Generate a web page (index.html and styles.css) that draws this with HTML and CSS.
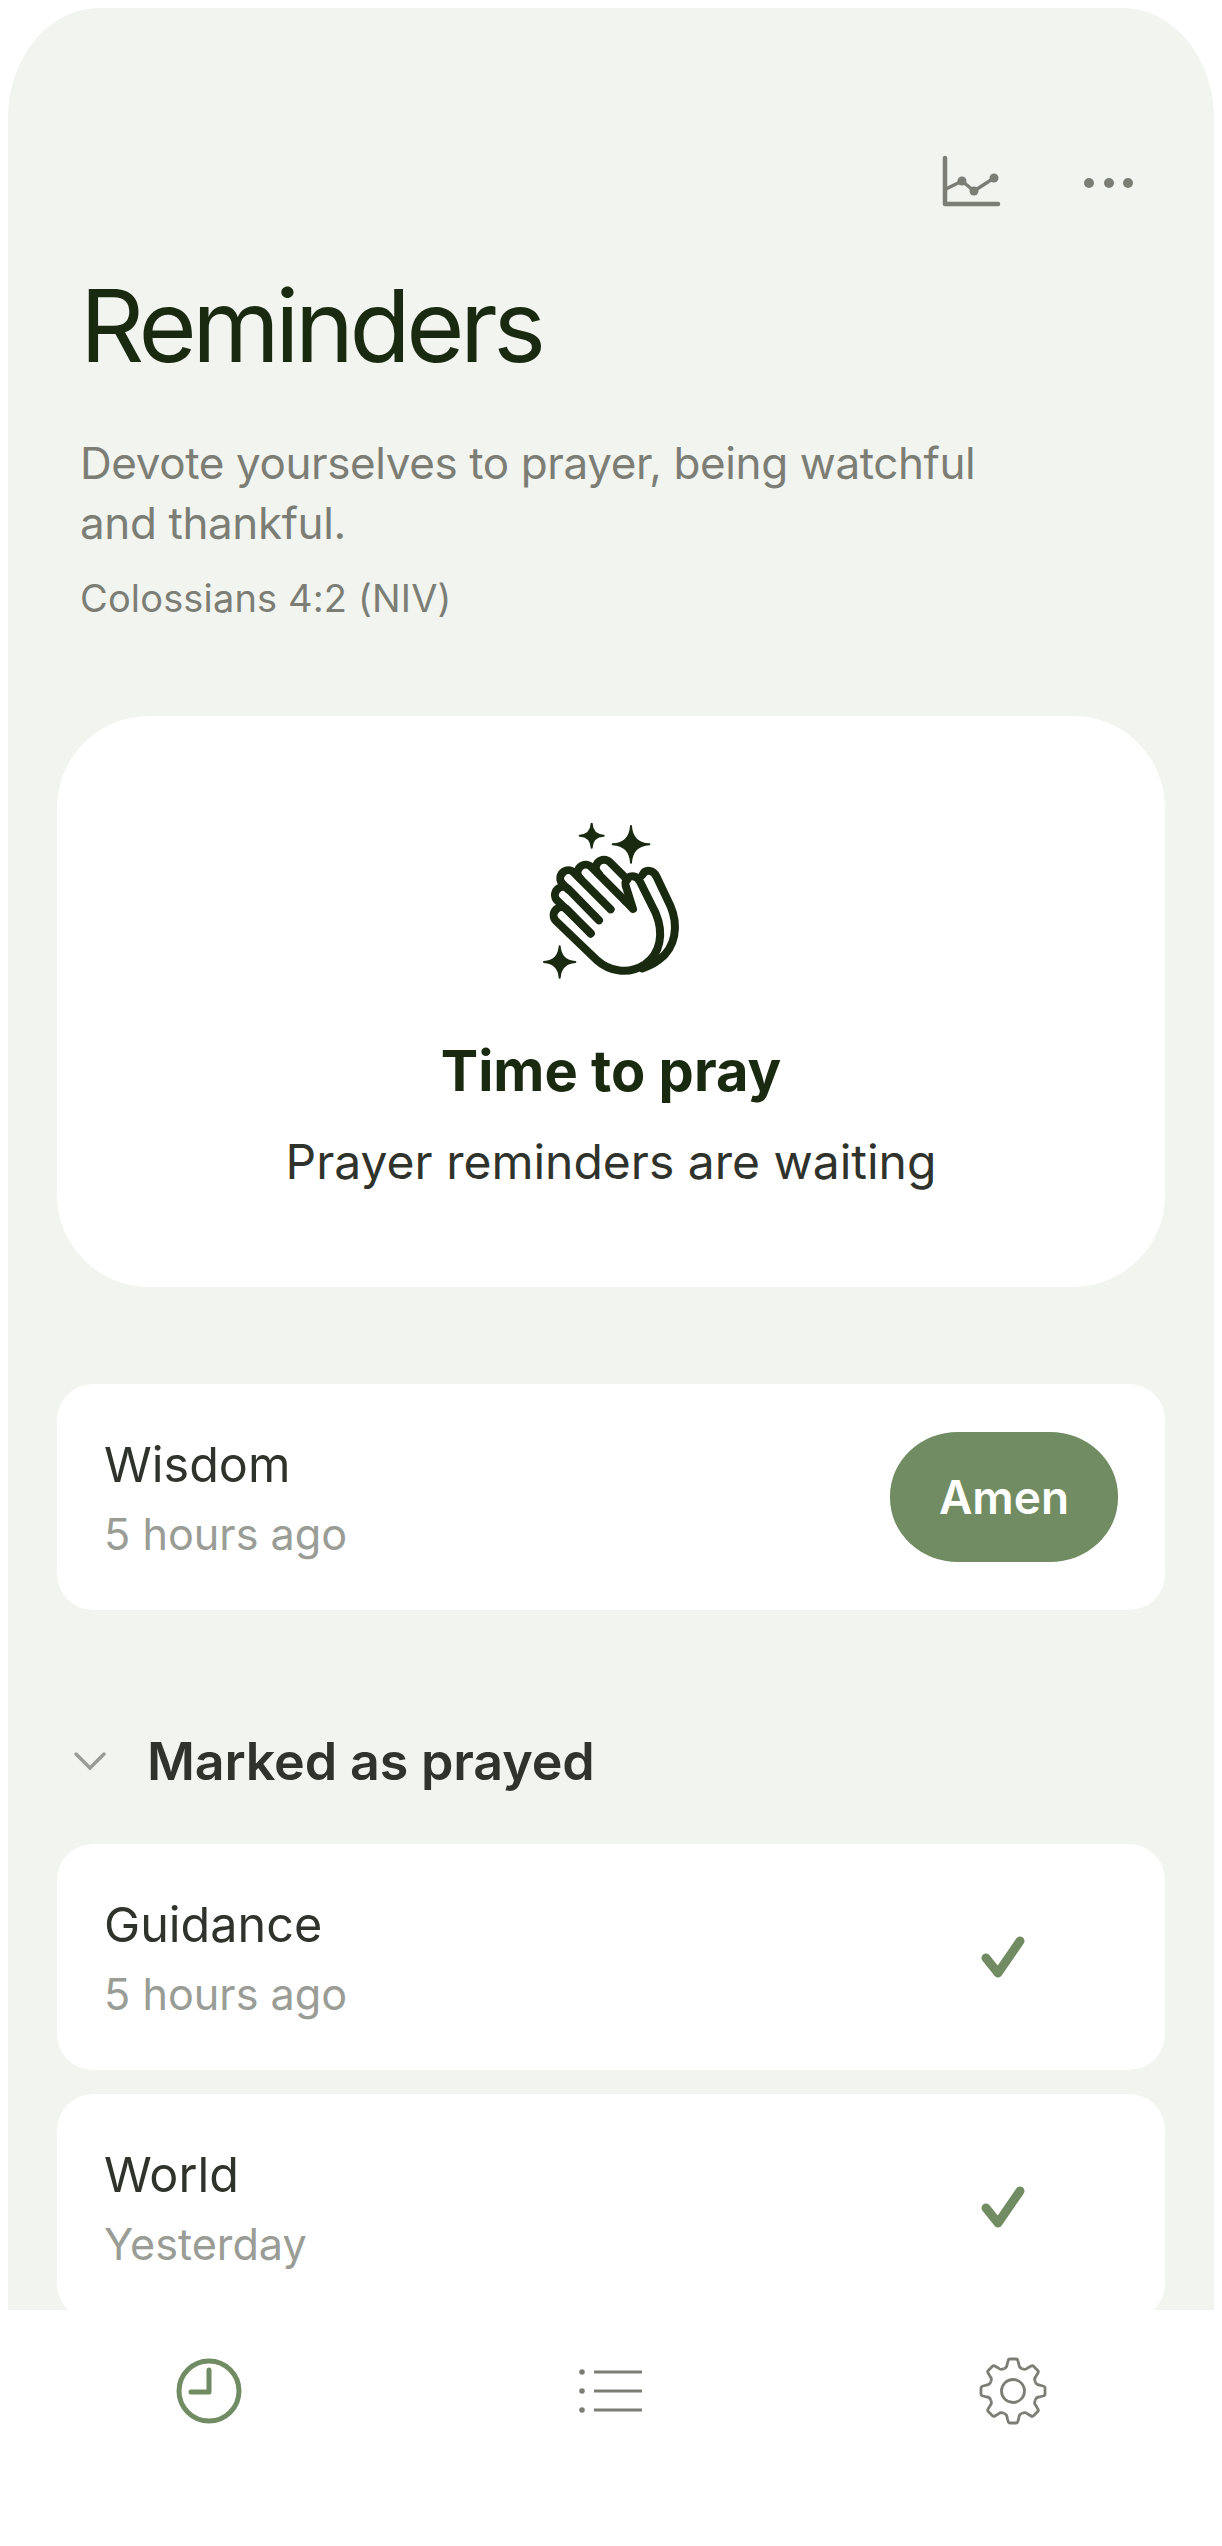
FILE: index.html
```html
<!DOCTYPE html>
<html lang="en">
<head>
    <meta charset="UTF-8">
    <meta name="viewport" content="width=device-width, initial-scale=1.0">
    <title>Reminders</title>
    <link rel="stylesheet" href="styles.css">
</head>
<body>
    <div class="panel">
        <div class="toolbar">
            <svg class="chart-icon" width="64" height="58" viewBox="0 0 64 58">
                <path class="chart-axis" d="M7 4V50H60"/>
                <path class="chart-line" d="M8 35L24 27L36 37L56 24"/>
                <circle cx="24" cy="27" r="4.5"/>
                <circle cx="36" cy="37" r="4.5"/>
                <circle cx="56" cy="24" r="4.5"/>
            </svg>
            <svg class="more-icon" width="50" height="12" viewBox="0 0 50 12">
                <circle cx="5" cy="6" r="5"/>
                <circle cx="25" cy="6" r="5"/>
                <circle cx="44" cy="6" r="5"/>
            </svg>
        </div>

        <h1>Reminders</h1>
        <p class="verse">Devote yourselves to prayer, being watchful<br>and thankful.</p>
        <p class="verse-ref">Colossians 4:2 (NIV)</p>

        <div class="hero">
            <svg class="hands" width="240" height="200" viewBox="0 0 720 600">
                <path class="spark" d="M338 98C339 120 352 133 374 134C352 135 339 148 338 170C337 148 324 135 302 134C324 133 337 120 338 98Z"/>
                <path class="spark" d="M456 105C458 138 478 158 511 160C478 162 458 182 456 215C454 182 434 162 401 160C434 158 454 138 456 105Z"/>
                <path class="spark" d="M242 466C244 494 261 511 289 513C261 515 244 532 242 560C240 532 223 515 195 513C223 511 240 494 242 466Z"/>
                <path class="hand" d="M490 252C500 232 524 238 532 256L574 344C600 404 590 470 540 506C525 518 508 526 490 532"/>
                <path class="hand" d="M335 428L265 356A24 24 0 0 0 231 390L352 506C392 542 448 552 498 520C544 488 556 428 530 366L482 270C468 244 434 256 440 284L462 354L440 331"/>
                <path class="hand" d="M335 426L235 329A24 24 0 0 1 269 295L360 388"/>
                <path class="hand" d="M268 296L251 279A24 24 0 0 1 285 245L395 355"/>
                <path class="hand" d="M305 264L303 262A24 24 0 0 1 337 228L440 331"/>
                <path class="hand" d="M360 249L358 247A24 24 0 0 1 392 213L445 266"/>
            </svg>
            <h2>Time to pray</h2>
            <p>Prayer reminders are waiting</p>
        </div>

        <div class="card card-due">
            <div class="card-text">
                <div class="card-title">Wisdom</div>
                <div class="card-time">5 hours ago</div>
            </div>
            <button class="amen">Amen</button>
        </div>

        <div class="section-head">
            <svg width="34" height="20" viewBox="0 0 34 20">
                <path d="M3 3L17 17L31 3"/>
            </svg>
            <span>Marked as prayed</span>
        </div>

        <div class="card">
            <div class="card-text">
                <div class="card-title">Guidance</div>
                <div class="card-time">5 hours ago</div>
            </div>
            <svg class="check" width="48" height="46" viewBox="0 0 48 46">
                <path d="M6 24L18 39L40 7"/>
            </svg>
        </div>
        <div class="card">
            <div class="card-text">
                <div class="card-title">World</div>
                <div class="card-time">Yesterday</div>
            </div>
            <svg class="check" width="48" height="46" viewBox="0 0 48 46">
                <path d="M6 24L18 39L40 7"/>
            </svg>
        </div>
    </div>

    <div class="tabbar">
        <div class="tab">
            <svg class="tab-clock" width="70" height="70" viewBox="0 0 70 70">
                <circle cx="35" cy="35" r="30"/>
                <path d="M35 14V36H17"/>
            </svg>
        </div>
        <div class="tab">
            <svg class="tab-list" width="70" height="60" viewBox="0 0 70 60">
                <circle cx="6" cy="11" r="2.8"/>
                <circle cx="6" cy="30" r="2.8"/>
                <circle cx="6" cy="49" r="2.8"/>
                <path d="M18 11H66M18 30H66M18 49H66"/>
            </svg>
        </div>
        <div class="tab">
            <svg class="tab-gear" width="70" height="70" viewBox="-35 -35 70 70">
                <defs>
                    <path id="tooth" d="M-9.2 -22.2Q-6 -23.5 -6 -26L-5 -30Q-4.6 -32 -3 -32H3Q4.6 -32 5 -30L6 -26Q6 -23.5 9.2 -22.2"/>
                </defs>
                <use href="#tooth"/>
                <use href="#tooth" transform="rotate(45)"/>
                <use href="#tooth" transform="rotate(90)"/>
                <use href="#tooth" transform="rotate(135)"/>
                <use href="#tooth" transform="rotate(180)"/>
                <use href="#tooth" transform="rotate(225)"/>
                <use href="#tooth" transform="rotate(270)"/>
                <use href="#tooth" transform="rotate(315)"/>
                <circle r="11.5"/>
            </svg>
        </div>
    </div>
</body>
</html>
```
FILE: styles.css
```css
body {
    font-family: Inter, "Liberation Sans", sans-serif;
    margin: 0;
    background-color: #fff;
    color: #2f332c;
}
.panel {
    margin: 8px 8px 0;
    height: 2302px;
    box-sizing: border-box;
    padding: 146px 49px 0;
    background-color: #f2f4f0;
    border-radius: 92px 92px 0 0 / 110px 110px 0 0;
    overflow: hidden;
}
.toolbar {
    display: flex;
    justify-content: flex-end;
    align-items: center;
    gap: 82px;
    padding-right: 31px;
}
.chart-icon circle, .more-icon circle {
    fill: #7c7e76;
}
.chart-axis, .chart-line {
    fill: none;
    stroke: #7c7e76;
    stroke-linecap: round;
    stroke-linejoin: round;
}
.chart-axis {
    stroke-width: 4.5;
}
.chart-line {
    stroke-width: 3.5;
}
h1 {
    margin: 56px 0 0 23px;
    font-size: 100px;
    line-height: 116px;
    font-weight: 400;
    letter-spacing: -4.5px;
    color: #1a2a10;
}
.verse {
    margin: 49px 0 0 23px;
    font-size: 44px;
    line-height: 60px;
    letter-spacing: -0.4px;
    color: #7c7e76;
}
.verse-ref {
    margin: 22px 0 0 23px;
    font-size: 38px;
    line-height: 46px;
    letter-spacing: 0.15px;
    color: #7c7e76;
}
.hero {
    margin-top: 95px;
    height: 571px;
    box-sizing: border-box;
    padding-top: 75px;
    background-color: #fff;
    border-radius: 92px;
    text-align: center;
}
.hands {
    display: block;
    margin: 0 auto;
    position: relative;
    left: -12px;
}
.spark {
    fill: #1a2a10;
    stroke: #1a2a10;
    stroke-width: 6;
    stroke-linejoin: round;
}
.hand {
    fill: none;
    stroke: #1a2a10;
    stroke-width: 24;
    stroke-linecap: round;
    stroke-linejoin: round;
}
.hero h2 {
    margin: 45px 0 0;
    font-size: 56px;
    line-height: 70px;
    font-weight: 700;
    color: #1a2a10;
}
.hero p {
    margin: 26px 0 0;
    font-size: 48px;
    line-height: 60px;
    color: #2f332c;
}
.card {
    display: flex;
    justify-content: space-between;
    align-items: center;
    height: 226px;
    box-sizing: border-box;
    padding: 0 47px;
    margin-bottom: 24px;
    background-color: #fff;
    border-radius: 36px;
}
.card-due {
    margin-top: 97px;
}
.card-title {
    font-size: 48.5px;
    line-height: 64px;
    color: #2f332c;
}
.card-time {
    margin-top: 9px;
    font-size: 43.2px;
    line-height: 56px;
    color: #9a9c96;
}
.amen {
    width: 228px;
    height: 130px;
    border: none;
    border-radius: 68px / 64px;
    background-color: #718c62;
    color: #fff;
    font-family: inherit;
    font-size: 46px;
    font-weight: 600;
}
.check {
    margin-right: 90px;
}
.check path {
    fill: none;
    stroke: #718c62;
    stroke-width: 9;
    stroke-linecap: round;
    stroke-linejoin: round;
}
.section-head {
    display: flex;
    align-items: center;
    gap: 40px;
    height: 60px;
    margin: 121px 0 53px 16px;
    font-size: 52px;
    font-weight: 600;
    letter-spacing: -0.15px;
    color: #2f332c;
}
.section-head path {
    fill: none;
    stroke: #9a9c96;
    stroke-width: 3.5;
    stroke-linecap: round;
}
.tabbar {
    display: grid;
    grid-template-columns: 1fr 1fr 1fr;
    padding: 46px 8px 0;
}
.tab {
    display: flex;
    justify-content: center;
}
.tab-clock circle, .tab-clock path {
    fill: none;
    stroke: #718c62;
    stroke-width: 5;
    stroke-linecap: round;
    stroke-linejoin: round;
}
.tab-list {
    margin-top: 5px;
}
.tab-list circle {
    fill: #7c7e76;
}
.tab-list path {
    fill: none;
    stroke: #7c7e76;
    stroke-width: 3;
}
.tab-gear use, .tab-gear circle {
    fill: none;
    stroke: #7c7e76;
    stroke-width: 2.8;
}
```
